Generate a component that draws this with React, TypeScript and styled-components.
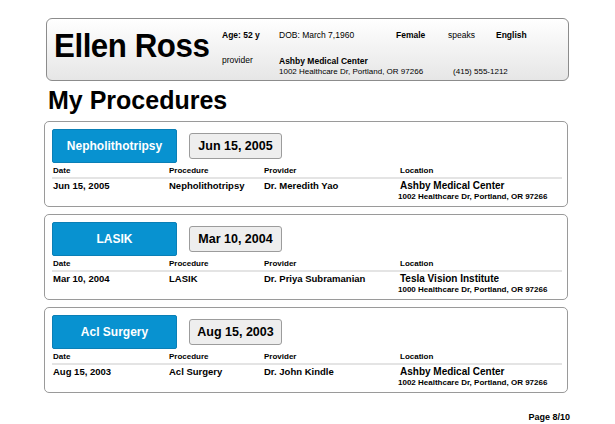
import styled, { createGlobalStyle } from "styled-components";

const GlobalStyle = createGlobalStyle`
  html, body {
    margin: 0;
    padding: 0;
    background: #ffffff;
  }
  body {
    font-family: "Liberation Sans", Arial, Helvetica, sans-serif;
    color: #000;
  }
`;

const Page = styled.div`
  width: 615px;
  height: 424px;
  padding: 18px 0 0 44px;
  box-sizing: border-box;
`;

const Header = styled.header`
  margin-left: 2px;
  width: 523px;
  height: 63px;
  box-sizing: border-box;
  border: 1px solid #8c8c8c;
  border-radius: 6px;
  background: linear-gradient(#ffffff, #e6e6e6);
  display: flex;
  align-items: flex-start;
  padding-left: 7px;
`;

const Name = styled.h1`
  margin: 7px 0 0 0;
  width: 168px;
  font-size: 34px;
  line-height: 38px;
  font-weight: bold;
  white-space: nowrap;
`;

// the name in the picture is set in a condensed cut
const Condensed = styled.span`
  display: inline-block;
  letter-spacing: -0.5px;
  transform: scaleX(0.92);
  transform-origin: left center;
`;

const Info = styled.div`
  margin-top: 11px;
  display: grid;
  grid-template-columns: 57px 117px 52px 48px auto;
  grid-auto-rows: 10px;
  font-size: 8.5px;
  line-height: 10px;
`;

const Cell = styled.span<{ $bold?: boolean; $span?: number; $gapAbove?: number }>`
  font-weight: ${(p) => (p.$bold ? "bold" : "normal")};
  grid-column: ${(p) => (p.$span ? `span ${p.$span}` : "auto")};
  margin-top: ${(p) => p.$gapAbove ?? 0}px;
  white-space: nowrap;
`;

const AddressLine = styled.span`
  grid-column: 2 / span 4;
  margin-top: 17px;
  display: flex;
  gap: 30px;
  font-size: 8px;
  white-space: nowrap;
`;

const Title = styled.h2`
  margin: 5px 0 7px 4px;
  font-size: 25px;
  line-height: 28px;
  font-weight: bold;
`;

const Card = styled.section`
  width: 524px;
  height: 86px;
  box-sizing: border-box;
  border: 1px solid #9a9a9a;
  border-radius: 5px;
  padding: 7px 4px 0 7px;
  margin-bottom: 7px;
  background: #fff;
`;

const Top = styled.div`
  display: flex;
  align-items: center;
  gap: 12px;
`;

const ProcButton = styled.div`
  width: 125px;
  height: 34px;
  box-sizing: border-box;
  background: #0892d0;
  border: 1px solid #0a7fb6;
  border-radius: 2px;
  color: #fff;
  font-weight: bold;
  font-size: 12px;
  display: flex;
  align-items: center;
  justify-content: center;
`;

const DateBox = styled.div`
  width: 93px;
  height: 26px;
  box-sizing: border-box;
  background: #eeeeee;
  border: 1px solid #9c9c9c;
  border-radius: 3px;
  font-weight: bold;
  font-size: 12.5px;
  display: flex;
  align-items: center;
  justify-content: center;
`;

const Row = styled.div<{ $head?: boolean }>`
  display: grid;
  grid-template-columns: 116px 95px 136px 1fr;
  margin-right: 1px;
  font-weight: bold;
  ${(p) =>
    p.$head
      ? `
    margin-top: 3px;
    font-size: 8px;
    line-height: 10px;
    padding: 0 1px 1px;
    border-bottom: 2px solid #e4e4e4;
  `
      : `
    margin-top: 1px;
    font-size: 9.5px;
    line-height: 12px;
    padding: 0 1px;
  `}
`;

const Location = styled.div`
  display: flex;
  flex-direction: column;
`;

const Place = styled.span`
  font-size: 10px;
  line-height: 12px;
`;

const Street = styled.span`
  font-size: 8px;
  line-height: 10px;
  margin-left: -2px;
`;

const Footer = styled.div`
  width: 526px;
  margin-top: 19px;
  text-align: right;
  font-weight: bold;
  font-size: 9px;
`;

type Procedure = {
  name: string;
  date: string;
  provider: string;
  place: string;
  street: string;
};

const procedures: Procedure[] = [
  {
    name: "Nepholithotripsy",
    date: "Jun 15, 2005",
    provider: "Dr. Meredith Yao",
    place: "Ashby Medical Center",
    street: "1002 Healthcare Dr, Portland, OR 97266",
  },
  {
    name: "LASIK",
    date: "Mar 10, 2004",
    provider: "Dr. Priya Subramanian",
    place: "Tesla Vision Institute",
    street: "1000 Healthcare Dr, Portland, OR 97266",
  },
  {
    name: "Acl Surgery",
    date: "Aug 15, 2003",
    provider: "Dr. John Kindle",
    place: "Ashby Medical Center",
    street: "1002 Healthcare Dr, Portland, OR 97266",
  },
];

const ProcedureCard = ({ p }: { p: Procedure }) => (
  <Card>
    <Top>
      <ProcButton>{p.name}</ProcButton>
      <DateBox>{p.date}</DateBox>
    </Top>
    <Row $head>
      <span>Date</span>
      <span>Procedure</span>
      <span>Provider</span>
      <span>Location</span>
    </Row>
    <Row>
      <span>{p.date}</span>
      <span>{p.name}</span>
      <span>{p.provider}</span>
      <Location>
        <Place>{p.place}</Place>
        <Street>{p.street}</Street>
      </Location>
    </Row>
  </Card>
);

const App = () => {
  return (
    <Page>
      <GlobalStyle />
      <Header>
        <Name>
          <Condensed>Ellen Ross</Condensed>
        </Name>
        <Info>
          <Cell $bold>Age: 52 y</Cell>
          <Cell>DOB: March 7,1960</Cell>
          <Cell $bold>Female</Cell>
          <Cell>speaks</Cell>
          <Cell $bold>English</Cell>
          <Cell $gapAbove={15}>provider</Cell>
          <Cell $bold $span={4} $gapAbove={16}>
            Ashby Medical Center
          </Cell>
          <AddressLine>
            <span>1002 Healthcare Dr, Portland, OR 97266</span>
            <span>(415) 555-1212</span>
          </AddressLine>
        </Info>
      </Header>
      <Title>My Procedures</Title>
      {procedures.map((p) => (
        <ProcedureCard key={p.name} p={p} />
      ))}
      <Footer>Page 8/10</Footer>
    </Page>
  );
};

export default App;
